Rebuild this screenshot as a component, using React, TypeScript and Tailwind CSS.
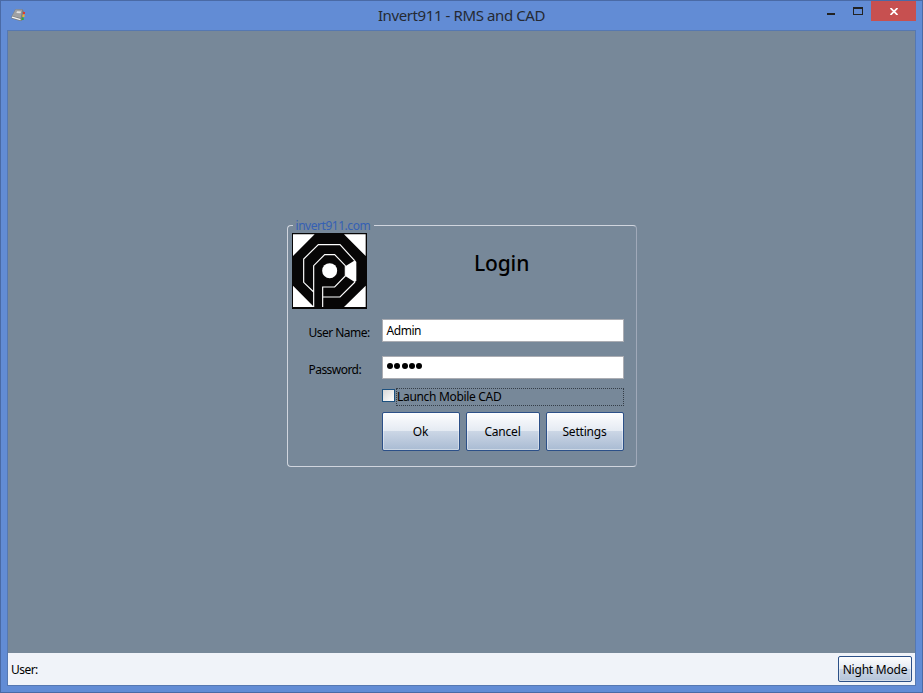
import type { ReactNode } from 'react';

function AppIcon() {
  return (
    <svg width="16" height="16" viewBox="0 0 16 16">
      <path d="M4.300 2.200 11.500 2.200 13 4.500 11 13.800 9 14 .5 11.500V9.500Z" fill="#7d7f82" />
      <path d="M4.600 2.600 11.200 2.800 9.600 11 1.200 8.900Z" fill="#a0a1a3" />
      <path d="M6 4.200 10 4.500 9.500 6.300 5.400 6Z" fill="#e2e2e2" />
      <path d="M1 10.200 9.500 12.600" stroke="#f6f6f6" strokeWidth="1.300" />
      <path d="M12 5h2v2h-2z" fill="#e2382e" />
      <path d="M11.500 7.500h2v2.500h-2z" fill="#f4b32c" />
      <path d="M10.700 10.500h2v2.500h-2z" fill="#29ad3b" />
    </svg>
  );
}

function Logo() {
  return (
    <svg width="75" height="76" viewBox="24 39 225 228" preserveAspectRatio="none">
      <rect x="24" y="39" width="225" height="228" fill="#070606" />
      <path d="M27 43H92L27 108ZM180 43H245V108ZM27 197V261H90ZM245 197V261H180Z" fill="#fff" />
      <path d="M213 121 185 138V169L213 187 217 181V126Z" fill="#fff" />
      <path
        d="M212 122 168 74H103L59 117V187L89 216M213 186 168 231H117M89 261V137L122 104H152L184 137V168L152 201H116V261"
        fill="none"
        stroke="#fff"
        strokeWidth="3.500"
      />
      <circle cx="137" cy="152" r="22.500" fill="#fff" />
    </svg>
  );
}

function PushButton({ width, children }: { width: string; children: ReactNode }) {
  return (
    <button
      className={`${width} h-[39px] rounded-[2px] border border-[#2c5088] bg-[linear-gradient(#fdfdfe_0%,#e4eaf2_49%,#cbd6e5_50%,#a9bbd3_100%)] pt-px pr-px text-[12px] tracking-[-0.2px] text-black shadow-[inset_0_0_0_1px_#ffffff66]`}
    >
      {children}
    </button>
  );
}

function TitleBar() {
  return (
    <header className="flex h-[29px] shrink-0">
      <div className="w-[130px] pt-[6px] pl-[10px]">
        <AppIcon />
      </div>
      <h1 className="flex-1 pt-[3px] text-center text-[15px] leading-[22px] tracking-[-0.4px] text-[#252a33]">
        Invert911 - RMS and CAD
      </h1>
      <div className="flex w-[130px] justify-end pr-[6px]">
        <span className="mt-[12px] h-[2px] w-[8px] bg-[#222]" />
        <span className="mt-[6px] ml-[18px] h-[8px] w-[10px] border border-t-2 border-[#222]" />
        <span className="ml-[8px] flex h-[20px] w-[45px] items-center justify-center bg-[#c75050]">
          <svg width="8" height="7" viewBox="0 0 8 7">
            <path d="M.5 0 7.500 7M7.500 0 .5 7" stroke="#fff" strokeWidth="1.700" />
          </svg>
        </span>
      </div>
    </header>
  );
}

export default function App() {
  return (
    <div className="flex h-[693px] w-[923px] flex-col border border-[#4a6aa5] bg-[#628cd5] font-['Noto_Sans',sans-serif] text-[12px] text-black">
      <TitleBar />
      <div className="mx-[6px] mb-[6px] flex flex-1 flex-col border border-[#5578b2]">
        <main className="flex-1 bg-[#778899] pt-[194px] pl-[279px]">
          <fieldset className="h-[242px] w-[350px]">
            <div className="grid h-[242px] w-[350px]">
              <div className="col-start-1 row-start-1 rounded-[4px] border border-[#d0d5de] border-r-[#a0a9b9]" />
              <div className="z-10 col-start-1 row-start-1">
                <div className="ml-[6px] h-[8px] w-[81px]">
                  <div className="h-[2px] bg-[#778899]" />
                  <div className="mt-[-9px] pl-[2.500px] leading-[16px] tracking-[-0.46px] text-[#3560b4]">
                    invert911.com
                  </div>
                </div>
                <div className="flex h-[76px] pl-[5px]">
                  <Logo />
                  <h2 className="ml-[107px] pt-[14px] text-[21px] leading-[32px] font-medium tracking-[-0.15px]">
                    Login
                  </h2>
                </div>
                <div className="mt-[10px] flex">
                  <label className="w-[95px] pt-[5px] pl-[21.500px] leading-[18px] tracking-[-0.52px] whitespace-nowrap">
                    User Name:
                  </label>
                  <div className="h-[23px] w-[242px] border border-[#abadb3] bg-white pl-[3.500px] leading-[21px] tracking-[-0.45px]">
                    Admin
                  </div>
                </div>
                <div className="mt-[14px] flex">
                  <label className="w-[95px] pt-[5px] pl-[21.500px] leading-[18px] tracking-[-0.55px] whitespace-nowrap">
                    Password:
                  </label>
                  <div className="flex h-[23px] w-[242px] gap-[1.300px] border border-[#abadb3] bg-white pt-[6px] pl-[4px]">
                    {[0, 1, 2, 3, 4].map((n) => (
                      <span key={n} className="h-[6px] w-[6px] rounded-full bg-black" />
                    ))}
                  </div>
                </div>
                <div className="mt-[8px] ml-[95px] flex h-[20px]">
                  <span className="mt-[2px] h-[13px] w-[13px] border border-[#1c5180] bg-gradient-to-br from-[#d8d8d8] to-white" />
                  <span className="mt-px ml-px flex h-[18px] w-[228px] border border-dotted border-[#343d47] leading-[16px] tracking-[-0.32px]">
                    Launch Mobile CAD
                  </span>
                </div>
                <div className="mt-[5px] ml-[95px] flex gap-[6px]">
                  <PushButton width="w-[78px]">Ok</PushButton>
                  <PushButton width="w-[74px]">Cancel</PushButton>
                  <PushButton width="w-[78px]">Settings</PushButton>
                </div>
              </div>
            </div>
          </fieldset>
        </main>
        <footer className="flex h-[32px] shrink-0 items-center justify-between bg-[#f0f3f9] pr-[3px] pl-[3px]">
          <span className="pt-[2px] tracking-[-0.55px]">User:</span>
          <button className="h-[26px] w-[74px] rounded-[2px] border border-[#2c5088] bg-[linear-gradient(#fdfdfe_0%,#e4eaf2_49%,#cbd6e5_50%,#b4c4d9_100%)] pt-px tracking-[-0.22px] whitespace-nowrap shadow-[inset_0_0_0_1px_#ffffff66]">
            Night Mode
          </button>
        </footer>
      </div>
    </div>
  );
}
